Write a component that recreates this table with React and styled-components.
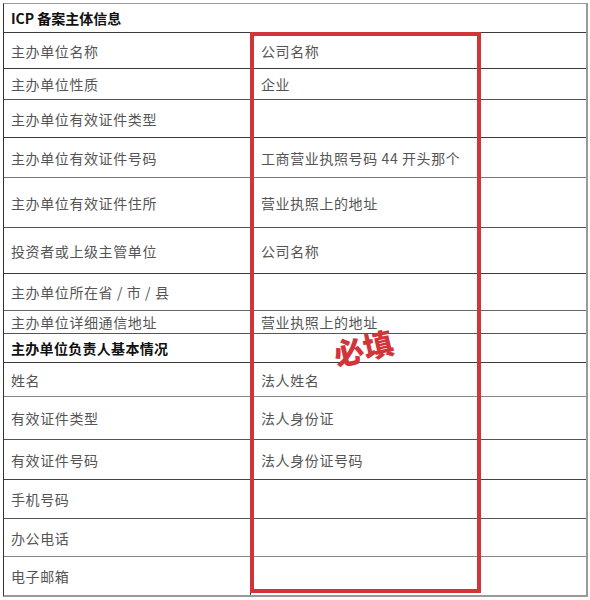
import React from 'react';
import styled, { createGlobalStyle } from 'styled-components';

const GlobalStyle = createGlobalStyle`
  html, body {
    margin: 0;
    padding: 0;
    background: #ffffff;
  }
  body {
    font-family: "Noto Sans CJK SC", "Noto Sans", sans-serif;
  }
`;

const Page = styled.div`
  padding: 3px 0 0 3px;
  width: 590px;
  height: 600px;
  box-sizing: border-box;
`;

const Table = styled.div`
  position: relative;
  display: flex;
  flex-direction: column;
  width: 585px;
  box-sizing: border-box;
  border: 1px solid #999;
  border-left-color: #333;
  border-right-width: 2px;
  border-bottom-width: 2px;
`;

const Row = styled.div`
  display: flex;
  align-items: stretch;
  height: ${p => p.h}px;
  box-sizing: border-box;
  border-bottom: ${p => (p.last ? 'none' : `1px solid ${p.tone || '#3a3a3a'}`)};
`;

const Label = styled.div`
  display: flex;
  align-items: center;
  width: 247px;
  flex-shrink: 0;
  box-sizing: border-box;
  padding-left: 7px;
  border-right: 1px solid #3a3a3a;
  font-size: 14px;
  letter-spacing: 0.6px;
  color: #555;
  white-space: nowrap;
`;

const Value = styled.div`
  display: flex;
  align-items: center;
  flex: 1;
  padding-left: 10px;
  font-size: 14px;
  letter-spacing: 0.6px;
  color: #555;
  white-space: nowrap;
`;

const Section = styled.div`
  display: flex;
  align-items: center;
  flex: 1;
  padding-left: 7px;
  font-size: 14px;
  font-weight: 700;
  letter-spacing: ${p => p.spacing || 0}px;
  color: #111;
  white-space: nowrap;
`;

const RedBox = styled.div`
  position: absolute;
  left: 246px;
  top: 28px;
  width: 231px;
  height: 561px;
  box-sizing: border-box;
  border: 4px solid #d1353a;
  pointer-events: none;
`;

const Stamp = styled.div`
  position: absolute;
  left: 329px;
  top: 328px;
  font-family: "Noto Sans CJK SC", sans-serif;
  font-size: 30px;
  font-weight: 900;
  line-height: 1;
  color: #d1353a;
  transform: rotate(-13deg);
  transform-origin: center;
`;

const rows = [
  { type: 'section', h: 29, text: 'ICP 备案主体信息' },
  { h: 36, label: '主办单位名称', value: '公司名称' },
  { h: 31, label: '主办单位性质', value: '企业', tone: '#555' },
  { h: 38, label: '主办单位有效证件类型', value: '' },
  { h: 40, label: '主办单位有效证件号码', value: '工商营业执照号码 44 开头那个', tone: '#777' },
  { h: 50, label: '主办单位有效证件住所', value: '营业执照上的地址', tone: '#555' },
  { h: 46, label: '投资者或上级主管单位', value: '公司名称' },
  { h: 37, label: '主办单位所在省 / 市 / 县', value: '', tone: '#666' },
  { h: 23, label: '主办单位详细通信地址', value: '营业执照上的地址', tone: '#555' },
  { type: 'section', h: 29, text: '主办单位负责人基本情况', spacing: 0.3 },
  { h: 34, label: '姓名', value: '法人姓名', tone: '#888' },
  { h: 43, label: '有效证件类型', value: '法人身份证', tone: '#555' },
  { h: 40, label: '有效证件号码', value: '法人身份证号码', tone: '#444' },
  { h: 39, label: '手机号码', value: '', tone: '#555' },
  { h: 38, label: '办公电话', value: '', tone: '#888' },
  { h: 38, label: '电子邮箱', value: '', last: true },
];

export default function App() {
  return (
    <Page>
      <GlobalStyle />
      <Table>
        {rows.map((r, i) =>
          r.type === 'section' ? (
            <Row key={i} h={r.h} tone={r.tone}>
              <Section spacing={r.spacing}>{r.text}</Section>
            </Row>
          ) : (
            <Row key={i} h={r.h} tone={r.tone} last={r.last}>
              <Label>{r.label}</Label>
              <Value>{r.value}</Value>
            </Row>
          )
        )}
        <RedBox />
        <Stamp>必填</Stamp>
      </Table>
    </Page>
  );
}
